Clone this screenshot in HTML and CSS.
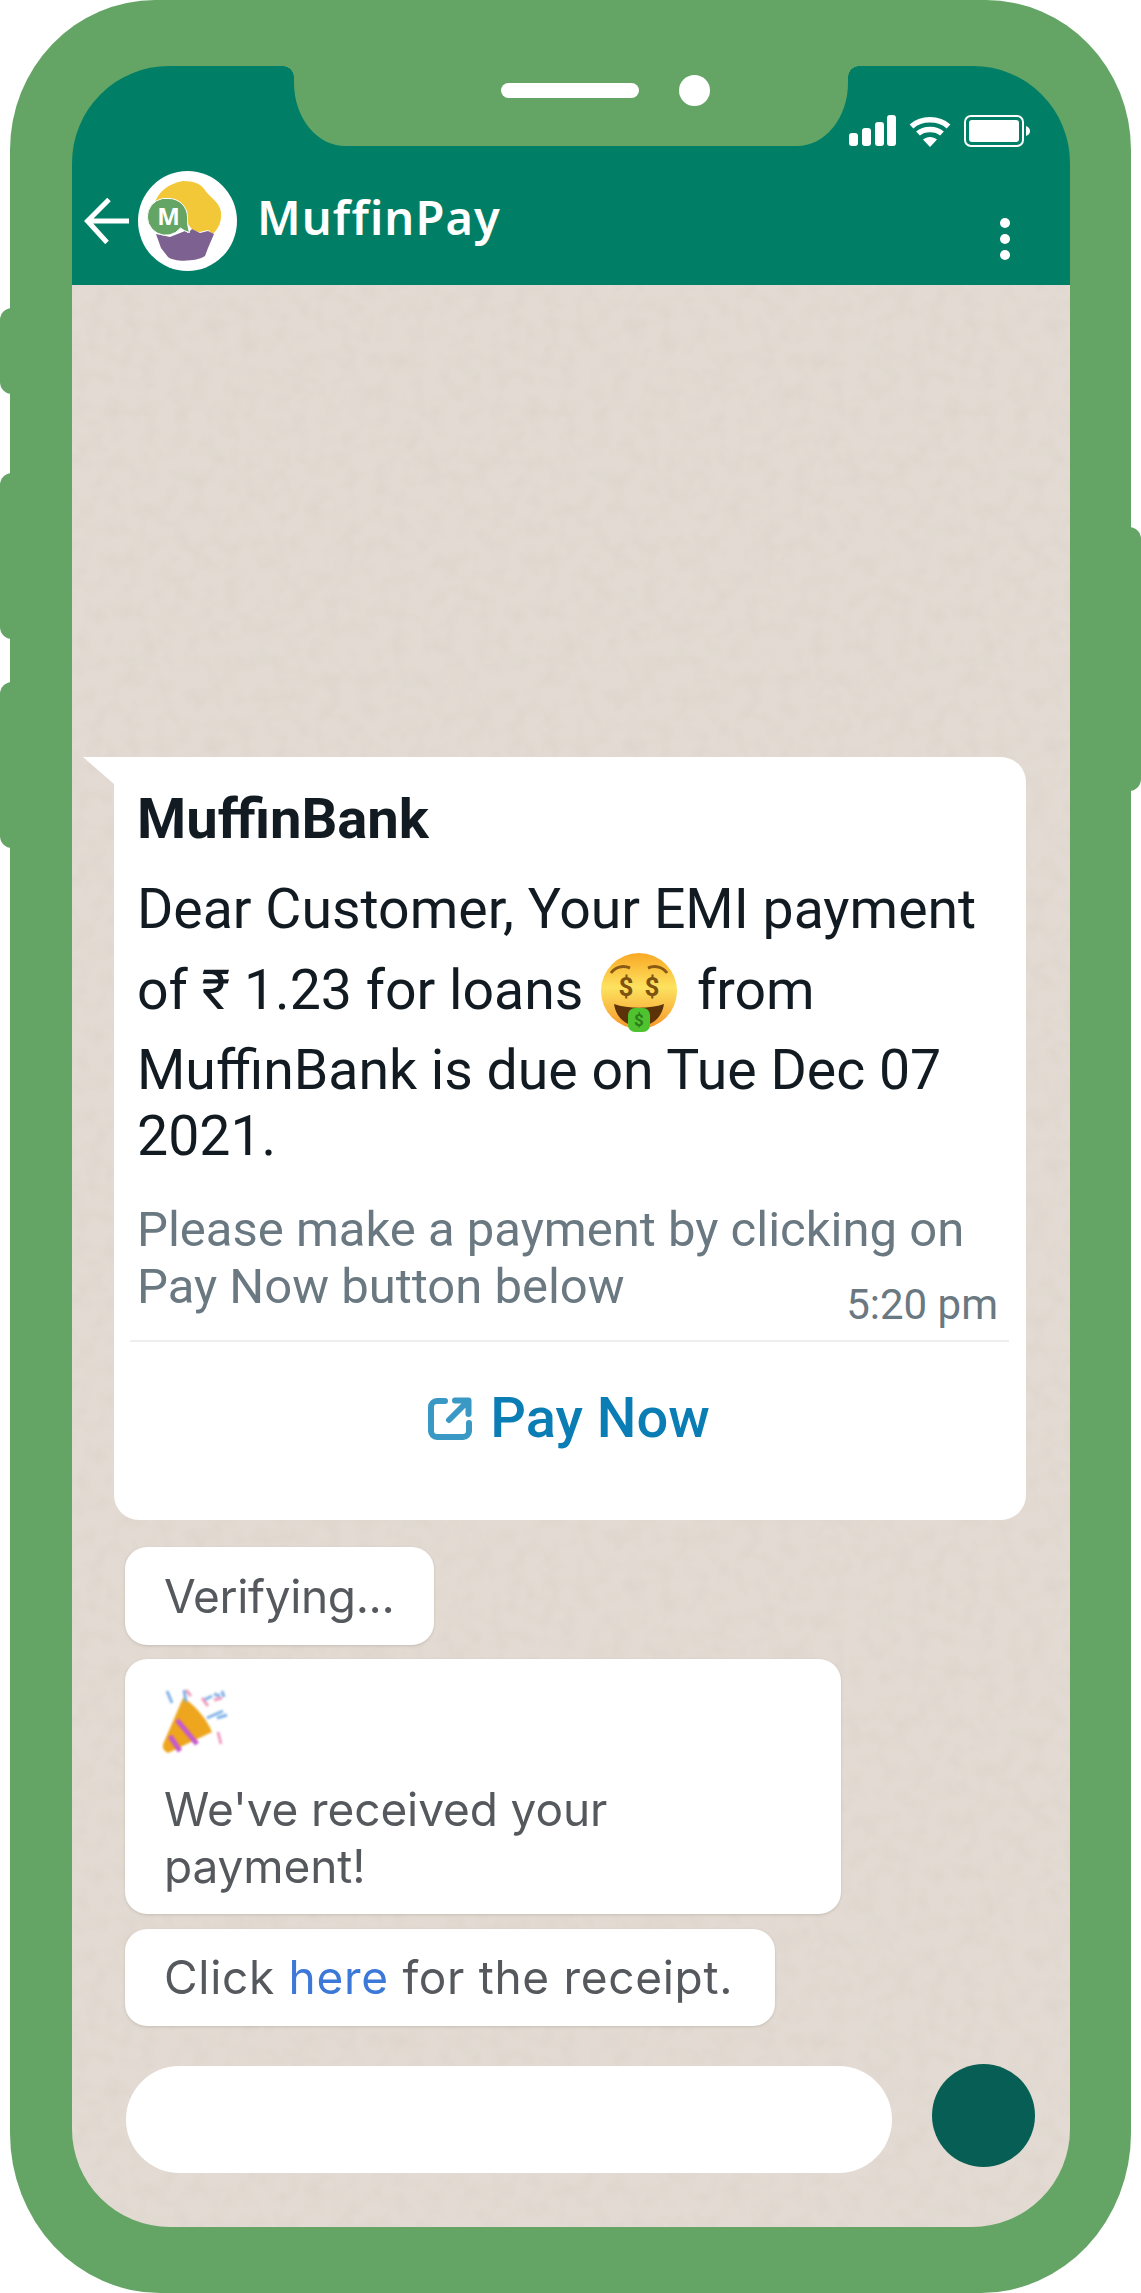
FILE: index.html
```html
<!DOCTYPE html>
<html lang="en">
<head>
<meta charset="utf-8">
<title>MuffinPay</title>
<link rel="stylesheet" href="styles.css">
</head>
<body>
<div class="device">
  <span class="side-btn side-a"></span>
  <span class="side-btn side-b"></span>
  <span class="side-btn side-c"></span>
  <span class="side-btn side-d"></span>
  <div class="phone">
    <div class="notch">
      <span class="speaker"></span>
      <span class="camera"></span>
    </div>
    <div class="screen">
      <header class="header">
        <div class="status">
          <svg class="ic-signal" viewBox="0 0 47 31" width="47" height="31"><rect x="0" y="18" width="9" height="13" rx="3"/><rect x="13" y="13" width="9" height="18" rx="3"/><rect x="26" y="7" width="9" height="24" rx="3"/><rect x="38" y="0" width="9" height="31" rx="3"/></svg>
          <svg class="ic-wifi" viewBox="0 0 42 32" width="42" height="32"><path class="wifi-arc" d="M2.500 11.500C12 2.500 30 2.500 39.500 11.500"/><path class="wifi-arc" d="M9 18.500C15 13 27 13 33 18.500"/><path class="wifi-fill" d="M14 24.500C18 21 24 21 28 24.500L21 32Z"/></svg>
          <svg class="ic-batt" viewBox="0 0 66 32" width="66" height="32"><rect class="batt-out" x="1" y="1" width="58" height="30" rx="6"/><rect class="batt-in" x="5" y="5" width="50" height="22" rx="3"/><path class="batt-nub" d="M62 11c3 1 4 3 4 5s-1 4-4 5z"/></svg>
        </div>
        <div class="titlebar">
          <svg class="ic-back" viewBox="0 0 46 46" width="46" height="46"><path d="M25 1.500L3.500 23L23 44.500M3.500 23H45"/></svg>
          <svg class="logo" viewBox="0 0 99 100" width="99" height="100">
            <ellipse cx="49.500" cy="50" rx="49.500" ry="50" fill="#fff"/>
            <path d="M17 31C21 21 29 13 45 10C56 10 63 13 67 19C70 25 82 31 83 41C84 51 80 58 75 63L70 59L62 61C57 61 53 58 50 53C47 46 48 40 44 34C36 27 25 28 17 31Z" fill="#f2c839"/>
            <path d="M18 63L32 66L47 60L50 62L54 58L62 62L70 60L76 63L70 77L67 85C60 90 38 92 30 86L23 77Z" fill="#7d6190"/>
            <path d="M31 27.500a18.500 18.500 0 0 1 18.500 18.500c0 5 0 9 2 15.500c-4-1-7-3-9-4.500A18.500 18.500 0 1 1 31 27.500Z" fill="#64a566" stroke="#fff" stroke-width="1"/>
            <text class="logo-m" x="30.500" y="54" text-anchor="middle">M</text>
          </svg>
          <h1 class="title">MuffinPay</h1>
          <div class="kebab"><i></i><i></i><i></i></div>
        </div>
      </header>
      <main class="chat">
        <article class="card">
          <h2 class="card-name">MuffinBank</h2>
          <div class="card-body">
            <p class="line line-a">Dear Customer, Your EMI payment</p>
            <p class="line line-b">of ₹ 1.23 for loans
              <svg class="emoji" viewBox="0 0 76 79" width="76" height="79">
                <defs><linearGradient id="faceg" x1="0" y1="0" x2="0" y2="1"><stop offset="0" stop-color="#f9a825"/><stop offset=".45" stop-color="#fde25f"/><stop offset="1" stop-color="#f5962a"/></linearGradient></defs>
                <circle cx="38" cy="38" r="38" fill="url(#faceg)"/>
                <path class="brow" d="M10 20c4-6 12-8 19-5M47 15c7-3 15-1 19 5"/>
                <text class="eye" x="25" y="43" text-anchor="middle">$</text>
                <text class="eye" x="51" y="43" text-anchor="middle">$</text>
                <path d="M13 51c14 5 36 5 50 0c-2 14-12 22-25 22s-23-8-25-22Z" fill="#5c3208"/>
                <rect x="27" y="55" width="22" height="24" rx="7" fill="#4fc32f"/>
                <text class="tongue" x="38" y="73" text-anchor="middle">$</text>
              </svg>
              from</p>
            <p class="line line-c">MuffinBank is due on Tue Dec 07</p>
            <p class="line">2021.</p>
          </div>
          <p class="card-foot">Please make a payment by clicking on<br>Pay Now button below</p>
          <time class="card-time">5:20 pm</time>
          <div class="card-rule"></div>
          <div class="card-action">
            <svg class="ic-open" viewBox="0 0 44 44" width="44" height="44"><path d="M17 5H9a6 6 0 0 0-6 6v24a6 6 0 0 0 6 6h26a6 6 0 0 0 6-6v-8"/><path d="M27 4.500h13.500V18M39 6L21 24"/></svg>
            <span class="pay">Pay Now</span>
          </div>
        </article>
        <div class="msg msg-verify"><span class="soft">Verifying...</span></div>
        <div class="msg msg-paid">
          <svg class="party" viewBox="0 0 78 66" width="78" height="66">
            <path d="M21 10C30 14 46 32 50 44L6 65C0 62 0 58 2 54Z" fill="#eea61e"/>
            <path d="M8 48l10 15M15 32l20 24" stroke="#c65ad0" stroke-width="5" fill="none"/>
            <path d="M5 3l5 12M22 2l2 12M42 12l8-4M52 6l6 2M60 3l2 6M45 30l16-7M55 30l10-3" stroke="#7fb2e8" stroke-width="3" fill="none"/>
            <path d="M24 2l5 6M40 10l6 8M52 12l8-2M56 44l3 12" stroke="#ef9fc0" stroke-width="3" fill="none"/>
          </svg>
          <p class="msg-text soft">We've received your<br>payment!</p>
        </div>
        <div class="msg msg-link"><span class="soft">Click <a class="here">here</a> for the receipt.</span></div>
        <div class="composer">
          <div class="input"></div>
          <div class="send"></div>
        </div>
      </main>
    </div>
  </div>
</div>
</body>
</html>
```

FILE: styles.css
```css
* { box-sizing: border-box; }
html, body { margin: 0; padding: 0; background: #fff; }
body { font-family: Roboto, "Liberation Sans", sans-serif; width: 1141px; height: 2293px; overflow: hidden; }
p, h1, h2 { margin: 0; font-weight: 400; }

.device { position: relative; width: 1141px; height: 2293px; }
.side-btn { position: absolute; background: #64a566; width: 30px; }
.side-a { left: 0; top: 308px; height: 86px; border-radius: 12px 0 0 12px; }
.side-b { left: 0; top: 473px; height: 166px; border-radius: 12px 0 0 12px; }
.side-c { left: 0; top: 682px; height: 166px; border-radius: 12px 0 0 12px; }
.side-d { right: 0; top: 527px; height: 264px; border-radius: 0 12px 12px 0; }

.phone {
  position: relative;
  margin-left: 10px;
  width: 1121px;
  height: 2293px;
  padding: 66px 61px 66px 62px;
  background: #64a566;
  border-radius: 145px 145px 150px 150px / 150px 150px 160px 160px;
}

.notch {
  position: absolute;
  left: 284px;
  top: 66px;
  width: 554px;
  height: 80px;
  background: #64a566;
  border-radius: 0 0 51px 51px / 0 0 63px 63px;
  z-index: 2;
}
.notch::before, .notch::after {
  content: "";
  position: absolute;
  top: 0;
  width: 11px;
  height: 11px;
}
.notch::before { left: -11px; background: radial-gradient(circle at 0 100%, transparent 10.500px, #64a566 11px); }
.notch::after { right: -11px; background: radial-gradient(circle at 100% 100%, transparent 10.500px, #64a566 11px); }
.speaker { position: absolute; left: 207px; top: 17px; width: 138px; height: 15px; border-radius: 8px; background: #fff; }
.camera { position: absolute; left: 385px; top: 9px; width: 31px; height: 31px; border-radius: 50%; background: #fff; }

.screen {
  display: flex;
  flex-direction: column;
  height: 2161px;
  border-radius: 97px 97px 98px 98px;
  overflow: hidden;
}

.header { height: 219px; background: #007f66; flex: none; }
.status { display: flex; justify-content: flex-end; align-items: center; padding: 48px 40px 0 0; height: 81px; }
.ic-signal { fill: #fff; margin-right: 13px; }
.ic-wifi { margin-right: 13px; }
.wifi-arc { fill: none; stroke: #fff; stroke-width: 5.500; }
.wifi-fill { fill: #fff; }
.batt-out { fill: none; stroke: #fff; stroke-width: 2; }
.batt-in, .batt-nub { fill: #fff; }

.titlebar { display: flex; align-items: center; padding: 24px 60px 0 12px; }
.ic-back { flex: none; margin-right: 8px; }
.ic-back path { fill: none; stroke: #fff; stroke-width: 5; }
.logo { flex: none; }
.logo-m { font-family: "Noto Sans", sans-serif; font-weight: 700; font-size: 24px; fill: #fff; }
.title { margin-left: 20px; font-family: "Noto Sans", sans-serif; font-weight: 600; font-size: 47px; line-height: 60px; color: #fff; letter-spacing: 1.100px; margin-top: -9px; }
.kebab { margin-left: auto; display: flex; flex-direction: column; gap: 6px; margin-top: 36px; }
.kebab i { display: block; width: 10px; height: 10px; border-radius: 50%; background: #fff; }

.chat {
  flex: 1;
  display: flex;
  flex-direction: column;
  align-items: flex-start;
  padding: 472px 0 0 53px;
  background-color: #e3dbd3;
  background-image: url("data:image/svg+xml,%3Csvg xmlns='http://www.w3.org/2000/svg' width='420' height='420'%3E%3Cfilter id='n' x='0' y='0' width='100%25' height='100%25'%3E%3CfeTurbulence type='fractalNoise' baseFrequency='.06' numOctaves='2' stitchTiles='stitch'/%3E%3CfeColorMatrix values='0 0 0 0 .5 0 0 0 0 .44 0 0 0 0 .4 0 0 0 .22 -.08'/%3E%3C/filter%3E%3Crect width='420' height='420' filter='url(%23n)'/%3E%3C/svg%3E");
}

.card {
  position: relative;
  width: 912px;
  height: 763px;
  margin-left: -11px;
  padding: 32px 24px 0 23px;
  background: #fff;
  border-radius: 0 25px 25px 25px;
  color: #111b21;
  flex: none;
}
.card::before {
  content: "";
  position: absolute;
  left: -31px;
  top: 0;
  width: 31px;
  height: 27px;
  background: #fff;
  clip-path: polygon(0 0, 100% 0, 100% 100%);
}
.card-name { font-size: 56.200px; font-weight: 700; line-height: 60px; white-space: nowrap; }
.card-body { margin-top: 28px; }
.line { font-size: 55.400px; line-height: 66px; height: 66px; white-space: nowrap; }
.line-a { margin-bottom: 15px; }
.line-b { margin-bottom: 14px; }
.emoji { display: inline-block; vertical-align: -3px; margin: -20px 6px -20px 4px; }
.brow { fill: none; stroke: #8a5a14; stroke-width: 3; }
.eye { font-family: Roboto, sans-serif; font-weight: 700; font-size: 26px; fill: #7d5310; }
.tongue { font-family: Roboto, sans-serif; font-weight: 700; font-size: 17px; fill: #2d7d1c; }
.card-foot { margin-top: 31px; font-size: 49px; line-height: 57px; color: #6a7881; white-space: nowrap; }
.card-time { position: absolute; right: 28px; top: 523px; font-size: 42px; line-height: 50px; color: #6a7881; }
.card-rule { height: 2px; margin: 25px -7px 0 -7px; background: #eeeeee; }
.card-action { display: flex; align-items: center; justify-content: center; gap: 18px; height: 151px; margin-left: -1px; }
.ic-open { flex: none; }
.ic-open path { fill: none; stroke: #3a98c4; stroke-width: 6; stroke-linecap: round; stroke-linejoin: round; }
.pay { font-size: 56px; font-weight: 500; line-height: 60px; color: #0a7db5; white-space: nowrap; }

.msg { background: #fff; border-radius: 22px; box-shadow: 0 1px 3px rgba(120, 110, 100, .25); padding-left: 39px; color: #55595d; font-family: Inter, Roboto, sans-serif; font-size: 46px; filter: blur(.7px); flex: none; }
.soft { white-space: nowrap; }
.msg-verify { width: 309px; height: 98px; margin-top: 27px; line-height: 98px; letter-spacing: -.35px; }
.msg-paid { width: 716px; height: 255px; margin-top: 14px; padding-top: 29px; }
.party { display: block; margin-left: -2px; filter: blur(.8px); }
.msg-text { margin-top: 27px; line-height: 57px; letter-spacing: -.1px; }
.msg-link { width: 650px; height: 97px; margin-top: 15px; line-height: 97px; letter-spacing: .7px; }
.here { color: #3b78d8; }

.composer { display: flex; align-items: flex-start; gap: 40px; margin-top: 38px; margin-left: 1px; }
.input { width: 766px; height: 107px; margin-top: 2px; border-radius: 54px; background: #fff; }
.send { width: 103px; height: 103px; border-radius: 50%; background: #075e54; }
```
